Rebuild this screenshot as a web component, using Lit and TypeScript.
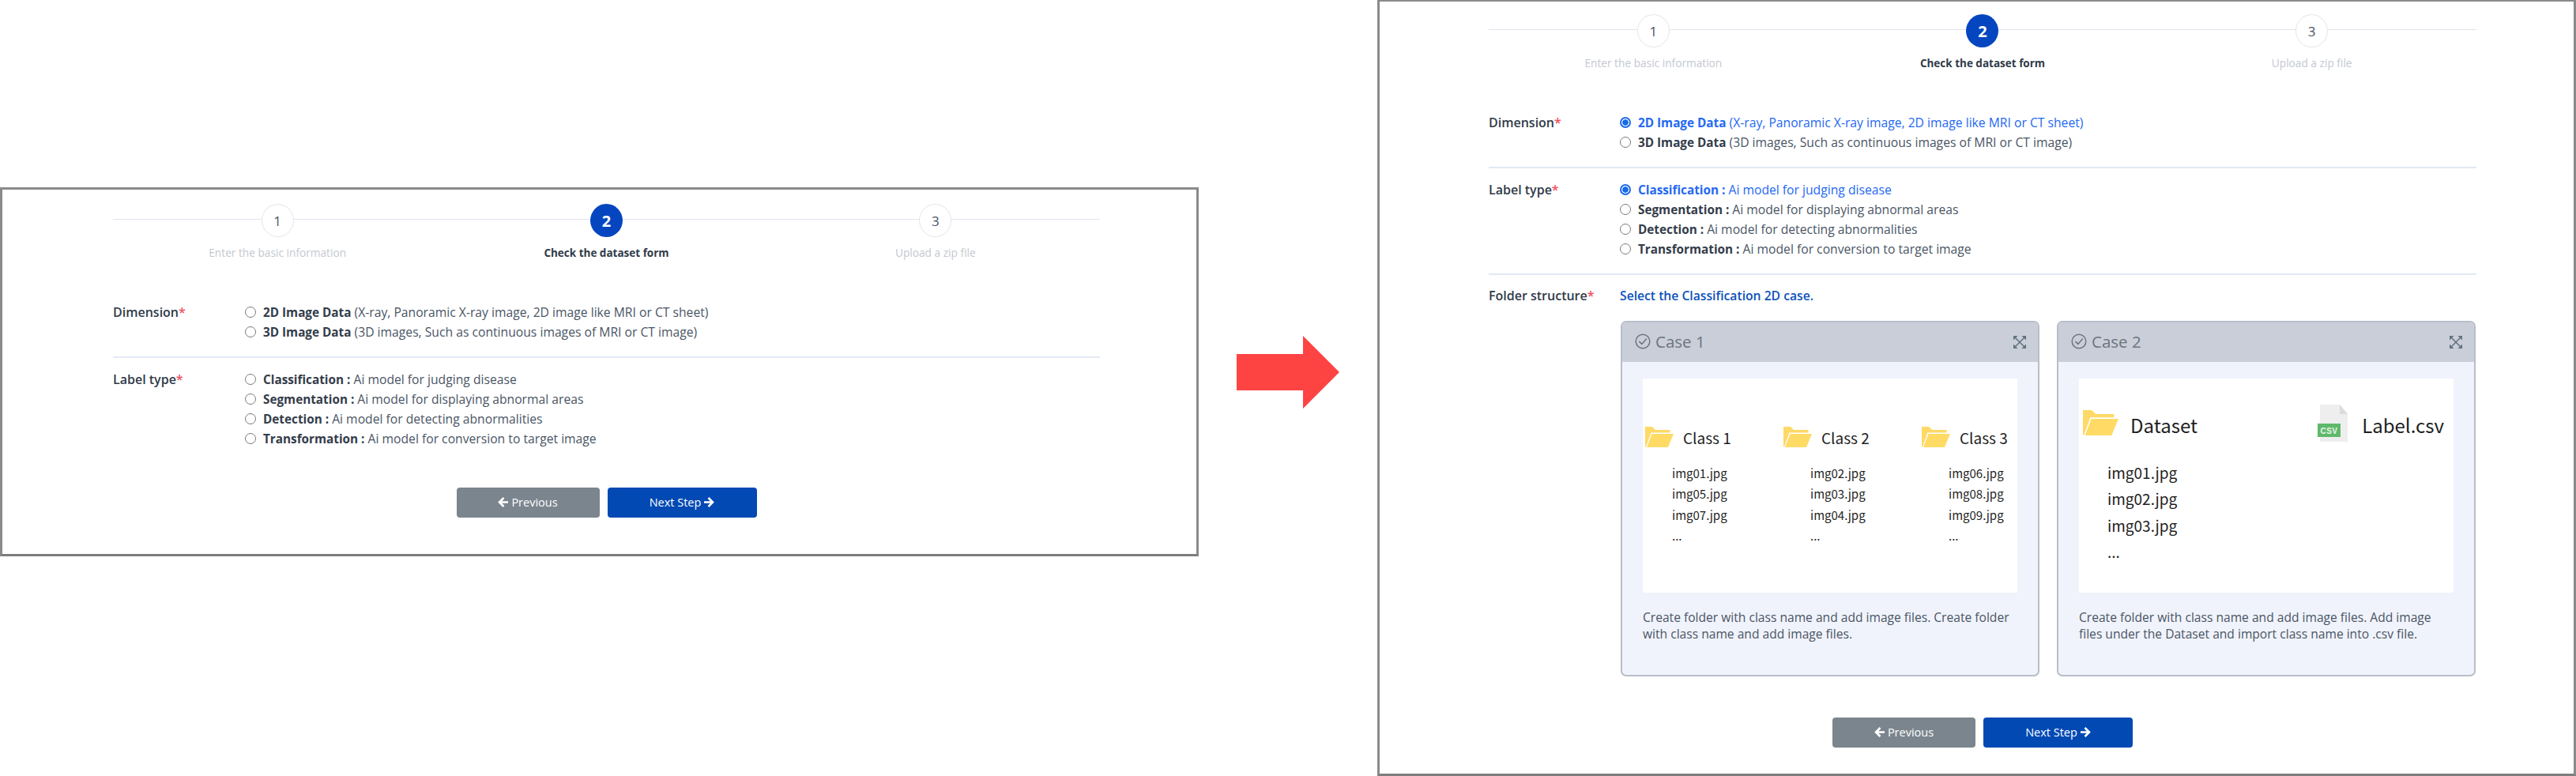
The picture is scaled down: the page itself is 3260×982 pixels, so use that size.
import { LitElement, html, css, svg } from "lit";
import { customElement, property } from "lit/decorators.js";

const folder = (w: number, h: number) => html`<svg class="folder" width=${w} height=${h} viewBox="0 0 36 26" preserveAspectRatio="none">
  <path d="M0 0h9l4 4h18.500v3.500H7.500L1 25.500H0z" fill="#ffd966"/>
  <path d="M8.500 9H36l-7 17H2z" fill="#ffdb66"/>
</svg>`;

const checkIcon = html`<svg class="chk" width="20" height="20" viewBox="0 0 20 20" fill="none" stroke="#6c757d" stroke-width="1.500">
  <circle cx="10" cy="10" r="8.800"/><path d="M5.800 10.400l3 3 5.600-6.400" stroke-linecap="round" stroke-linejoin="round"/>
</svg>`;

const expandIcon = html`<svg class="exp" width="16" height="16" viewBox="0 0 16 16">
  <path d="M2.500 2.500l11 11M13.500 2.500l-11 11" stroke="#62727f" stroke-width="1.500" fill="none"/>
  <path d="M0 0h5.500L0 5.500zM16 0v5.500L10.500 0zM0 16v-5.500L5.500 16zM16 16h-5.500L16 10.500z" fill="#62727f"/>
</svg>`;

const csvIcon = html`<svg class="csv" width="41" height="47" viewBox="0 0 41 47">
  <path d="M3 0h25l10 12v35H3z" fill="#eeeeee"/>
  <path d="M28 0l10 12H28z" fill="#dcdcdc"/>
  <rect x="0" y="24" width="29" height="17" fill="#5fb96c"/>
  <text x="14.500" y="36.500" text-anchor="middle" class="csvt">CSV</text>
</svg>`;

const arrowLeft = svg`<path d="M7 1L1.500 6.500 7 12M2 6.500h10.500" fill="none" stroke="#fff" stroke-width="2.600"/>`;
const arrowRight = svg`<path d="M6 1l5.500 5.500L6 12M11 6.500H.5" fill="none" stroke="#fff" stroke-width="2.600"/>`;

@customElement("wizard-panel")
class WizardPanel extends LitElement {
  @property({ type: Boolean }) filled = false;

  static styles = css`
    :host { display: block; box-sizing: border-box; width: 1517px; border: 3px solid #8a8a8a; border-bottom-color: #7d7d7d; background: #fff; padding: 18px 122px 0 140px; font-family: "Open Sans", "Noto Sans", sans-serif; color: #3f4a59; }
    :host([filled]) { padding-top: 16px; padding-left: 138px; padding-right: 123px; }
    .stepper { display: grid; grid-template-columns: repeat(3, 1fr); position: relative; margin-bottom: 52.500px; }
    .stepper::before { content: ""; position: absolute; left: 0; right: 0; top: 19px; height: 1px; background: #e0e5ee; }
    .step { display: flex; flex-direction: column; align-items: center; position: relative; }
    .dot { box-sizing: border-box; width: 41px; height: 42px; border-radius: 50%; background: #fff; border: 1px solid #e4e6ea; display: flex; align-items: center; justify-content: center; font-size: 17px; color: #4a5568; }
    .step.on .dot { background: #0546c0; border: 0; color: #fff; font-weight: 700; font-size: 20px; }
    .cap { margin-top: 10px; font-size: 13.700px; line-height: 20px; color: #c3c8d0; }
    .step.on .cap { color: #2f3a48; font-weight: 700; font-size: 13.500px; }
    .row { display: grid; grid-template-columns: 167px 1fr; padding: 0 0 18px; border-bottom: 2px solid #e3e8f4; margin-bottom: 15px; }
    .row.last { border-bottom: 0; padding-bottom: 0; margin-bottom: 0; }
    :host([filled]) .row { grid-template-columns: 166px 1fr; }
    .lab { font-size: 16px; line-height: 25px; font-weight: 600; color: #2f3a48; }
    .lab i { font-style: normal; color: #f0505f; }
    .opt { display: flex; align-items: center; font-size: 15.700px; line-height: 25px; color: #4a5565; height: 25px; white-space: nowrap; }
    .opt b { color: #333c4a; font-weight: 700; font-size: 15.300px; }
    .opt.sel, .opt.sel b { color: #2468f2; }
    .rad { box-sizing: border-box; flex: none; width: 14px; height: 14px; margin-right: 9px; border-radius: 50%; border: 1px solid #7a7a7a; background: #fff; }
    .sel .rad { border: 2px solid #1a6ae8; background: radial-gradient(circle, #1a6ae8 0 3.500px, #fff 4px); }
    .hint { font-size: 15.700px; line-height: 25px; font-weight: 600; color: #0d52b8; }
    .folderRow { margin-top: -1px; }
    .cards { display: grid; grid-template-columns: 530px 530px; gap: 22px; margin: 19px 0 0 1px; }
    .card { box-sizing: border-box; height: 450px; border: 2px solid #b8bdca; border-radius: 7px; background: #f0f3fb; overflow: hidden; }
    .head { height: 50px; background: #c9ced9; display: flex; align-items: center; padding: 0 15px 2px 16px; box-sizing: border-box; font-size: 20.500px; color: #6c757d; }
    .chk { margin-right: 6px; }
    .exp { margin-left: auto; margin-top: 3px; }
    .box { height: 271px; margin: 21px 26px 0; background: #fff; color: #1e1e1e; box-sizing: border-box; font-family: "Noto Sans CJK KR", "Noto Sans", sans-serif; }
    .desc { margin: 21px 26px 0; font-size: 15.600px; line-height: 21px; color: #4a5565; }
    .three { display: grid; grid-template-columns: repeat(3, 175px); padding: 61px 0 0 3px; }
    .cname { display: flex; align-items: center; gap: 12px; font-size: 19px; line-height: 26px; height: 26px; }
    .cname span { padding-top: 2px; }
    .files { padding: 20px 0 0 34px; font-size: 15px; line-height: 26.500px; }
    .two { padding: 33px 12px 0 5px; }
    .tworow { display: flex; justify-content: space-between; align-items: center; height: 47px; font-size: 24px; line-height: 30px; }
    .side { display: flex; align-items: center; gap: 15px; }
    .side span { padding-top: 6px; }
    .csvt { font: 700 10px "Liberation Sans", sans-serif; fill: #e8f6ea; letter-spacing: .5px; }
    .files2 { padding: 22px 0 0 31px; font-size: 19px; line-height: 33.500px; }
    .btns { display: flex; justify-content: center; gap: 10px; margin-top: 49px; padding-bottom: 46px; }
    :host([filled]) .btns { margin-top: 52px; padding-bottom: 33px; }
    .btn { box-sizing: border-box; height: 38px; border-radius: 4px; display: flex; align-items: center; justify-content: center; gap: 3px; color: #fff; font-size: 14.500px; font-weight: 500; }
    .prev { width: 181px; background: #7b858e; }
    .next { width: 189px; background: #0249b4; }
  `;

  private opt(sel: boolean, name: string, rest: string) {
    return html`<div class="opt ${sel ? "sel" : ""}"><span class="rad"></span><span><b>${name}</b> ${rest}</span></div>`;
  }

  render() {
    const f = this.filled;
    const step = (n: number, t: string) => html`<div class="step ${n === 2 ? "on" : ""}"><div class="dot">${n}</div><div class="cap">${t}</div></div>`;
    return html`
      <div class="stepper">
        ${step(1, "Enter the basic information")}${step(2, "Check the dataset form")}${step(3, "Upload a zip file")}
      </div>
      <div class="row">
        <div class="lab">Dimension<i>*</i></div>
        <div>
          ${this.opt(f, "2D Image Data", "(X-ray, Panoramic X-ray image, 2D image like MRI or CT sheet)")}
          ${this.opt(false, "3D Image Data", "(3D images, Such as continuous images of MRI or CT image)")}
        </div>
      </div>
      <div class="row ${f ? "" : "last"}">
        <div class="lab">Label type<i>*</i></div>
        <div>
          ${this.opt(f, "Classification :", "Ai model for judging disease")}
          ${this.opt(false, "Segmentation :", "Ai model for displaying abnormal areas")}
          ${this.opt(false, "Detection :", "Ai model for detecting abnormalities")}
          ${this.opt(false, "Transformation :", "Ai model for conversion to target image")}
        </div>
      </div>
      ${f ? html`
      <div class="row folderRow last">
        <div class="lab">Folder structure<i>*</i></div>
        <div>
          <div class="hint">Select the Classification 2D case.</div>
          <div class="cards">
            <div class="card">
              <div class="head">${checkIcon}Case 1${expandIcon}</div>
              <div class="box three">
                ${[["Class 1", "img01.jpg", "img05.jpg", "img07.jpg"], ["Class 2", "img02.jpg", "img03.jpg", "img04.jpg"], ["Class 3", "img06.jpg", "img08.jpg", "img09.jpg"]].map(([c, a, b, d]) => html`
                  <div>
                    <div class="cname">${folder(36, 26)}<span>${c}</span></div>
                    <div class="files">${a}<br>${b}<br>${d}<br>...</div>
                  </div>`)}
              </div>
              <div class="desc">Create folder with class name and add image files. Create folder with class name and add image files.</div>
            </div>
            <div class="card">
              <div class="head">${checkIcon}Case 2${expandIcon}</div>
              <div class="box two">
                <div class="tworow">
                  <div class="side">${folder(45, 32)}<span>Dataset</span></div>
                  <div class="side">${csvIcon}<span>Label.csv</span></div>
                </div>
                <div class="files2">img01.jpg<br>img02.jpg<br>img03.jpg<br>...</div>
              </div>
              <div class="desc">Create folder with class name and add image files. Add image files under the Dataset and import class name into .csv file.</div>
            </div>
          </div>
        </div>
      </div>` : ""}
      <div class="btns">
        <div class="btn prev"><svg width="14" height="13" viewBox="0 0 13 13">${arrowLeft}</svg>Previous</div>
        <div class="btn next">Next Step<svg width="14" height="13" viewBox="0 0 13 13">${arrowRight}</svg></div>
      </div>
    `;
  }
}

@customElement("app-root")
class AppRoot extends LitElement {
  static styles = css`
    :host { display: block; width: 3260px; height: 982px; overflow: hidden; background: #fff; }
    .page { display: flex; align-items: flex-start; }
    .left { margin-top: 237px; flex: none; }
    .arrow { flex: none; margin: 425px 48px 0 48px; width: 130px; height: 92px; }
    .right { margin-top: -1px; flex: none; }
  `;
  render() {
    return html`<div class="page">
      <wizard-panel class="left"></wizard-panel>
      <svg class="arrow" viewBox="0 0 130 92"><path d="M0 23h84V0l46 46-46 46V69H0z" fill="#fe4343"/></svg>
      <wizard-panel class="right" filled></wizard-panel>
    </div>`;
  }
}
